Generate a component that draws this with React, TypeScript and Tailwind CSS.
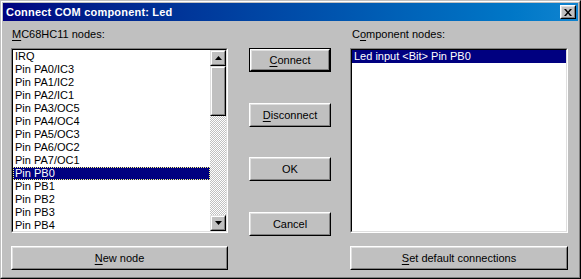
import React from "react";

const leftItems = [
  "IRQ",
  "Pin PA0/IC3",
  "Pin PA1/IC2",
  "Pin PA2/IC1",
  "Pin PA3/OC5",
  "Pin PA4/OC4",
  "Pin PA5/OC3",
  "Pin PA6/OC2",
  "Pin PA7/OC1",
  "Pin PB0",
  "Pin PB1",
  "Pin PB2",
  "Pin PB3",
  "Pin PB4",
];

// classic raised 3d button
function Btn({ children, def, className = "" }: { children: React.ReactNode; def?: boolean; className?: string }) {
  const inner = (
    <div className="h-full border border-t-white border-l-white border-r-black border-b-black">
      <div className="h-full flex items-center justify-center border border-t-[#dfdfdf] border-l-[#dfdfdf] border-r-[#808080] border-b-[#808080] text-black">
        {children}
      </div>
    </div>
  );
  if (def) {
    return <div className={`h-[24px] border border-black ${className}`}>{inner}</div>;
  }
  return <div className={`h-[24px] ${className}`}>{inner}</div>;
}

function Arrow({ up }: { up?: boolean }) {
  return (
    <div className="w-[16px] h-[16px] shrink-0 border border-t-[#dfdfdf] border-l-[#dfdfdf] border-r-black border-b-black">
      <div className="h-full flex items-center justify-center border border-t-white border-l-white border-r-[#808080] border-b-[#808080] bg-[#c0c0c0]">
        <svg width="7" height="4" viewBox="0 0 7 4">
          {up ? <path d="M3.5 0 L7 4 L0 4 Z" fill="#000" /> : <path d="M0 0 L7 0 L3.5 4 Z" fill="#000" />}
        </svg>
      </div>
    </div>
  );
}

function Sunken({ children, className = "" }: { children: React.ReactNode; className?: string }) {
  return (
    <div className={`border border-t-[#808080] border-l-[#808080] border-r-white border-b-white ${className}`}>
      <div className="h-full border border-t-black border-l-black border-r-[#dfdfdf] border-b-[#dfdfdf] bg-white flex">
        {children}
      </div>
    </div>
  );
}

export default function App() {
  return (
    <div
      className="w-[581px] h-[279px] border border-t-[#c0c0c0] border-l-[#c0c0c0] border-r-black border-b-black text-[11px] leading-[13px] text-black"
      style={{ fontFamily: '"Liberation Sans", Arial, sans-serif' }}
    >
      <div className="h-full flex flex-col bg-[#c0c0c0] p-px border border-t-white border-l-white border-r-[#808080] border-b-[#808080]">
        {/* title bar */}
        <div className="h-[18px] flex items-center bg-gradient-to-r from-[#000080] to-[#1084d0] pl-[3px] pr-[2px]">
          <span className="font-bold text-white text-[11px] tracking-[0.2px]">Connect COM component: Led</span>
          <div className="ml-auto w-[16px] h-[14px] border border-t-white border-l-white border-r-black border-b-black">
            <div className="h-full flex items-center justify-center bg-[#c0c0c0] border border-t-[#dfdfdf] border-l-[#dfdfdf] border-r-[#808080] border-b-[#808080]">
              <svg width="8" height="7" viewBox="0 0 8 7">
                <path d="M0 0h2l2 2.5L6 0h2L5 3.5 8 7H6L4 4.5 2 7H0l3-3.5z" fill="#000" />
              </svg>
            </div>
          </div>
        </div>

        <div className="flex pl-[8px]">
          {/* left column */}
          <div className="w-[217px] pt-[7px] flex flex-col">
            <div className="h-[13px] pl-px">
              <span className="underline underline-offset-2">M</span>C68HC11 nodes:
            </div>
            <Sunken className="mt-[7px] h-[185px]">
              <div className="flex-1 flex flex-col overflow-hidden">
                {leftItems.map((it) => (
                  <div
                    key={it}
                    className={
                      it === "Pin PB0"
                        ? "h-[13px] shrink-0 px-[2px] bg-[#000080] text-white outline-1 outline-dotted outline-[#ffff80] -outline-offset-1"
                        : "h-[13px] shrink-0 px-[2px]"
                    }
                  >
                    {it}
                  </div>
                ))}
              </div>
              <div className="w-[16px] flex flex-col bg-[repeating-conic-gradient(#c0c0c0_0%_25%,#ffffff_0%_50%)] bg-[length:2px_2px]">
                <Arrow up />
                <div className="h-[50px] border border-t-[#dfdfdf] border-l-[#dfdfdf] border-r-black border-b-black">
                  <div className="h-full bg-[#c0c0c0] border border-t-white border-l-white border-r-[#808080] border-b-[#808080]" />
                </div>
                <div className="flex-1" />
                <Arrow />
              </div>
            </Sunken>
            <Btn className="mt-[13px]">
              <span>
                <span className="underline underline-offset-2">N</span>ew node
              </span>
            </Btn>
          </div>

          {/* middle buttons */}
          <div className="w-[82px] ml-[21px] pt-[27px] flex flex-col">
            <Btn def>
              <span>
                <span className="underline underline-offset-2">C</span>onnect
              </span>
            </Btn>
            <Btn className="mt-[31px]">
              <span>
                <span className="underline underline-offset-2">D</span>isconnect
              </span>
            </Btn>
            <Btn className="mt-[30px]">OK</Btn>
            <Btn className="mt-[31px]">Cancel</Btn>
          </div>

          {/* right column */}
          <div className="w-[218px] ml-[19px] pt-[7px] flex flex-col">
            <div className="h-[13px] pl-[2px]">
              C<span className="underline underline-offset-2">o</span>mponent nodes:
            </div>
            <Sunken className="mt-[7px] h-[185px]">
              <div className="flex-1 flex flex-col">
                <div className="h-[13px] px-[2px] bg-[#000080] text-white">Led input &lt;Bit&gt; Pin PB0</div>
              </div>
            </Sunken>
            <Btn className="mt-[13px]">
              <span>
                <span className="underline underline-offset-2">S</span>et default connections
              </span>
            </Btn>
          </div>
        </div>
      </div>
    </div>
  );
}
